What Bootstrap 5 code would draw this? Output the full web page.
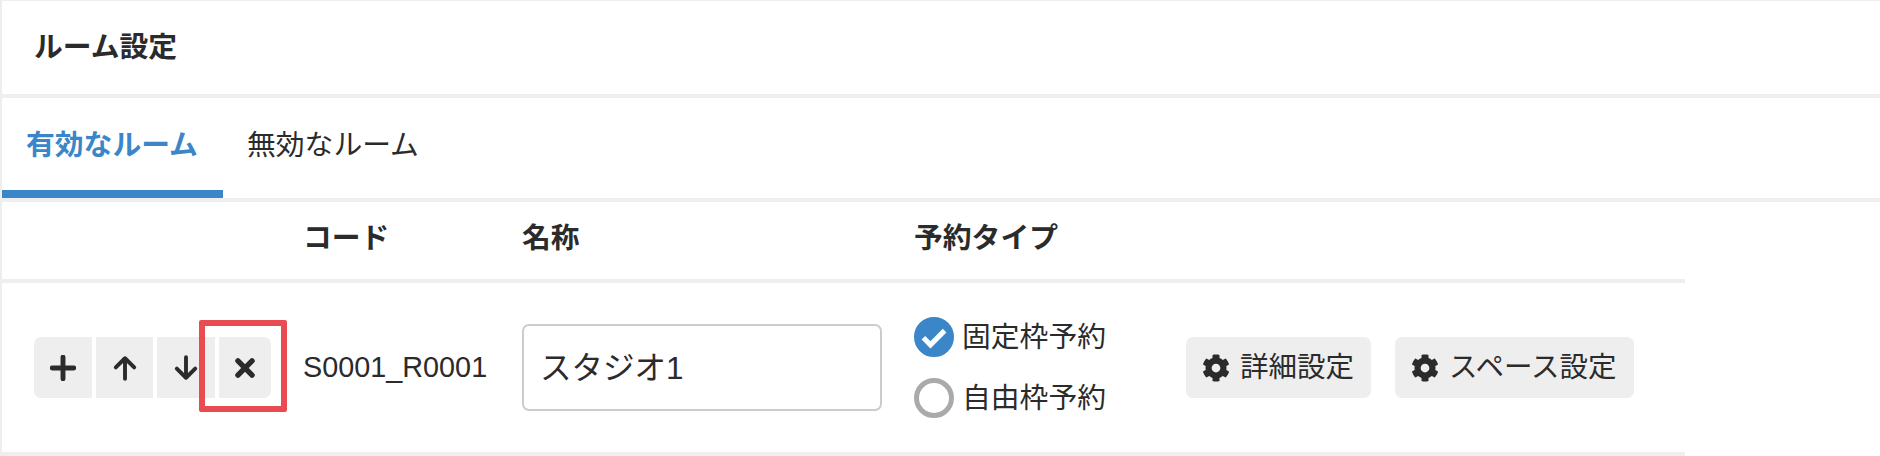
<!DOCTYPE html>
<html lang="ja">
<head>
  <meta charset="UTF-8">
  <title>ルーム設定</title>
  <link rel="stylesheet" href="https://cdn.jsdelivr.net/npm/bootstrap@5.3.0/dist/css/bootstrap.min.css">
  <style>
    html, body { height: 456px; overflow: hidden; }
    body { font-family: "Liberation Sans", "Noto Sans CJK JP", sans-serif; font-size: 28.8px; color: #2b2b2b; background: #fff; }
    .page-wrap { border-left: 2px solid #eee; border-top: 1px solid #eee; }
    .room-title { height: 97px; border-bottom: 4px solid #eee; padding-left: 32px; font-size: 28.8px; font-weight: 700; margin: 0; line-height: 93px; }
    .room-tabs { height: 104px; border-bottom: 4px solid #eee; flex-wrap: nowrap; }
    .room-tabs .nav-link { height: 100px; padding: 0 25px 0 24px; font-size: 28.8px; line-height: 94px; color: #2b2b2b; border-radius: 0; }
    .room-tabs .nav-link.active { width: 221px; color: #3a86c8; font-weight: 700; border-bottom: 8px solid #3a86c8; }
    .room-table { width: 1683px; }
    .head-row { height: 81px; border-bottom: 4px solid #eee; font-weight: 700; padding-bottom: 3px; }
    .body-row { height: 173px; border-bottom: 4px solid #eee; }
    .col-ops { width: 301px; padding-left: 32px; }
    .col-code { width: 219px; }
    .col-name { width: 392px; }
    .col-type { width: 272px; }
    .ops-group { position: relative; gap: 4px; }
    .ops-group .btn { height: 61px; width: 58px; flex: none; padding: 0; background: #eee; border: 0; border-radius: 0; color: #2b2b2b; display: flex; align-items: center; justify-content: center; }
    .ops-group .btn.ops-up { width: 57px; }
    .ops-group .btn.ops-add { border-radius: 7px 0 0 7px; }
    .ops-group .btn.ops-del { width: 52px; border-radius: 0 7px 7px 0; }
    .ops-group svg { width: 26px; height: 26px; }
    .red-mark { position: absolute; left: 165px; top: -17px; width: 88px; height: 92px; border: 6px solid #e84c50; border-radius: 2px; pointer-events: none; }
    .room-input.form-control { width: 360px; height: 87px; font-size: 31.5px; color: #2b2b2b; padding: 0 16px 5px; border: 2px solid #ccc; border-radius: 7px; }
    .type-opts { gap: 21px; }
    .type-opts .form-check { margin: 0; padding: 0; min-height: 0; gap: 8px; height: 40px; }
    .type-opts .form-check-input { width: 40px; height: 40px; margin: 0; float: none; flex: none; border: 5px solid #aaa; }
    .type-opts .form-check-input:checked { background-color: #3a86c8; border-color: #3a86c8; background-size: 34px; background-image: url("data:image/svg+xml,%3Csvg xmlns='http://www.w3.org/2000/svg' viewBox='0 0 24 24'%3E%3Cpath d='M4.500 12.500l5 5L19.500 7.500' fill='none' stroke='%23fff' stroke-width='3.600'/%3E%3C/svg%3E"); }
    .type-opts .form-check-label { line-height: 40px; }
    .set-btns { gap: 24px; }
    .set-btn.btn { height: 61px; padding: 0 17px 0 16px; background: #eee; border: 0; border-radius: 7px; font-size: 28.5px; color: #2b2b2b; display: flex; align-items: center; gap: 10px; }
    .set-btn svg { width: 28px; height: 28px; }
  </style>
</head>
<body>
  <div class="page-wrap">
    <h1 class="room-title">ルーム設定</h1>

    <ul class="nav room-tabs">
      <li class="nav-item"><a class="nav-link active" href="#">有効なルーム</a></li>
      <li class="nav-item"><a class="nav-link" href="#">無効なルーム</a></li>
    </ul>

    <div class="room-table">
      <div class="head-row d-flex align-items-center">
        <div class="col-ops"></div>
        <div class="col-code">コード</div>
        <div class="col-name">名称</div>
        <div class="col-type">予約タイプ</div>
      </div>
      <div class="body-row d-flex align-items-center">
        <div class="col-ops">
          <div class="ops-group d-inline-flex">
            <button class="btn ops-add" type="button"><svg viewBox="0 0 24 24"><path d="M12 2v20M2 12h20" fill="none" stroke="currentColor" stroke-width="4.500" stroke-linecap="round"/></svg></button>
            <button class="btn ops-up" type="button"><svg viewBox="0 0 24 24"><path d="M12 22V3M3.500 11.500L12 3l8.500 8.500" fill="none" stroke="currentColor" stroke-width="3.600" stroke-linecap="round" stroke-linejoin="round"/></svg></button>
            <button class="btn" type="button"><svg viewBox="0 0 24 24"><path d="M12 2v19M3.500 12.500L12 21l8.500-8.500" fill="none" stroke="currentColor" stroke-width="3.600" stroke-linecap="round" stroke-linejoin="round"/></svg></button>
            <button class="btn ops-del" type="button"><svg viewBox="0 0 24 24"><path d="M5.500 5.500l13 13M18.500 5.500l-13 13" fill="none" stroke="currentColor" stroke-width="5" stroke-linecap="round"/></svg></button>
            <span class="red-mark"></span>
          </div>
        </div>
        <div class="col-code">S0001_R0001</div>
        <div class="col-name"><input class="form-control room-input" type="text" value="スタジオ1"></div>
        <div class="col-type">
          <div class="type-opts d-flex flex-column">
            <div class="form-check d-flex align-items-center">
              <input class="form-check-input" type="radio" name="rtype" id="rtype1" checked>
              <label class="form-check-label" for="rtype1">固定枠予約</label>
            </div>
            <div class="form-check d-flex align-items-center">
              <input class="form-check-input" type="radio" name="rtype" id="rtype2">
              <label class="form-check-label" for="rtype2">自由枠予約</label>
            </div>
          </div>
        </div>
        <div class="set-btns d-flex">
          <button class="btn set-btn" type="button"><svg viewBox="0 0 512 512"><path fill="currentColor" d="M487.4 315.7l-42.6-24.6c4.3-23.2 4.3-47 0-70.2l42.6-24.6c4.900-2.800 7.100-8.600 5.500-14-11.100-35.600-30-67.800-54.700-94.600-3.800-4.100-10-5.100-14.800-2.300L380.800 110c-17.900-15.400-38.500-27.300-60.800-35.100V25.800c0-5.600-3.900-10.500-9.400-11.700-36.700-8.200-74.300-7.800-109.200 0-5.500 1.200-9.400 6.100-9.400 11.700V75c-22.200 7.900-42.800 19.800-60.800 35.100L88.700 85.500c-4.900-2.800-11-1.900-14.800 2.300-24.700 26.700-43.600 58.900-54.700 94.600-1.700 5.400.6 11.200 5.500 14L67.300 221c-4.300 23.200-4.300 47 0 70.200l-42.600 24.600c-4.900 2.800-7.100 8.600-5.500 14 11.100 35.600 30 67.800 54.700 94.600 3.800 4.100 10 5.100 14.800 2.300l42.600-24.600c17.900 15.400 38.500 27.300 60.800 35.100v49.200c0 5.600 3.900 10.500 9.400 11.700 36.700 8.200 74.300 7.800 109.200 0 5.500-1.200 9.400-6.100 9.400-11.700v-49.200c22.200-7.900 42.800-19.800 60.800-35.100l42.600 24.600c4.900 2.800 11 1.900 14.800-2.300 24.700-26.700 43.600-58.900 54.700-94.600 1.500-5.500-.7-11.300-5.600-14.100zM256 336c-44.100 0-80-35.900-80-80s35.900-80 80-80 80 35.900 80 80-35.900 80-80 80z"/></svg>詳細設定</button>
          <button class="btn set-btn" type="button"><svg viewBox="0 0 512 512"><path fill="currentColor" d="M487.4 315.7l-42.6-24.6c4.3-23.2 4.3-47 0-70.2l42.6-24.6c4.900-2.800 7.100-8.600 5.500-14-11.100-35.600-30-67.800-54.700-94.600-3.800-4.100-10-5.100-14.800-2.300L380.800 110c-17.900-15.400-38.500-27.300-60.800-35.100V25.800c0-5.600-3.900-10.500-9.400-11.700-36.700-8.200-74.300-7.800-109.200 0-5.500 1.200-9.400 6.100-9.400 11.700V75c-22.200 7.900-42.800 19.800-60.800 35.100L88.700 85.500c-4.900-2.800-11-1.900-14.800 2.300-24.700 26.700-43.600 58.900-54.700 94.600-1.700 5.400.6 11.200 5.500 14L67.300 221c-4.300 23.200-4.300 47 0 70.200l-42.600 24.600c-4.900 2.800-7.100 8.600-5.500 14 11.100 35.600 30 67.800 54.700 94.600 3.800 4.100 10 5.100 14.800 2.300l42.600-24.600c17.900 15.400 38.500 27.300 60.800 35.100v49.200c0 5.600 3.900 10.500 9.400 11.700 36.700 8.200 74.300 7.800 109.200 0 5.500-1.200 9.400-6.100 9.400-11.700v-49.200c22.200-7.900 42.800-19.800 60.800-35.100l42.600 24.600c4.900 2.800 11 1.900 14.800-2.300 24.700-26.700 43.600-58.900 54.700-94.600 1.500-5.500-.7-11.300-5.600-14.100zM256 336c-44.100 0-80-35.900-80-80s35.900-80 80-80 80 35.900 80 80-35.900 80-80 80z"/></svg>スペース設定</button>
        </div>
      </div>
    </div>
  </div>
</body>
</html>
